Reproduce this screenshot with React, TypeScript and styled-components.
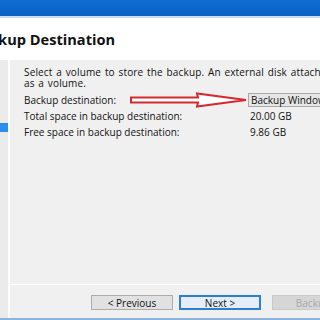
import React from 'react'
import styled, { createGlobalStyle } from 'styled-components'

const GlobalStyle = createGlobalStyle`
  html, body {
    margin: 0;
    padding: 0;
    width: 320px;
    height: 320px;
    overflow: hidden;
    background: #ffffff;
  }
`

const Window = styled.div`
  width: 320px;
  height: 320px;
  display: flex;
  flex-direction: column;
  overflow: hidden;
  font-family: 'Open Sans', 'Noto Sans', sans-serif;
  color: #111111;
  border-bottom: 2px solid #8db4dc;
  box-sizing: border-box;
`

const TitleBar = styled.div`
  height: 16px;
  flex: none;
  background: linear-gradient(#0f6cd0, #0a62c4);
  border-bottom: 2px solid #c9dcf1;
`

const Header = styled.div`
  height: 42px;
  flex: none;
  background: #ffffff;
  display: flex;
  align-items: center;
  overflow: hidden;
`

const Title = styled.h1`
  margin: 0 0 0 -28px;
  font-size: 14.6px;
  font-weight: 700;
  white-space: nowrap;
  color: #111111;
`

const Body = styled.div`
  flex: 1;
  display: flex;
  min-height: 0;
`

const Nav = styled.div`
  width: 8px;
  flex: none;
  background: #ebebeb;
  border-right: 2px solid #ffffff;
  padding-top: 63px;
`

const NavItem = styled.div<{ $active?: boolean }>`
  height: 9px;
  background: ${p => (p.$active ? '#2b8ff0' : 'transparent')};
`

const Main = styled.div`
  flex: 1;
  display: flex;
  flex-direction: column;
  background: #f0f0f0;
  min-width: 0;
`

const Content = styled.div`
  flex: 1;
  padding: 7px 0 0 14px;
  font-size: 10px;
  overflow: hidden;
`

const Intro = styled.p`
  margin: 0 0 3px;
  line-height: 11px;
  white-space: nowrap;
  letter-spacing: 0.15px;
  word-spacing: 1px;
`

const Row = styled.div`
  position: relative;
  display: grid;
  grid-template-columns: 224px auto;
  align-items: center;
  height: 16px;
  white-space: nowrap;
`

const Value = styled.span`
  padding-left: 2px;
`

const Dropdown = styled.div`
  height: 14px;
  box-sizing: border-box;
  display: flex;
  align-items: center;
  padding-left: 2px;
  background: #e6e6e6;
  border: 1px solid #a9a9a9;
  width: 120px;
`

const Annotation = styled.svg`
  position: absolute;
  left: 106px;
  top: 0;
  width: 118px;
  height: 16px;
`

const Footer = styled.div`
  height: 34px;
  flex: none;
  box-sizing: border-box;
  border-top: 1px solid #ffffff;
  display: flex;
  align-items: flex-start;
  padding: 10px 0 0 81px;
  gap: 6px;
`

const Button = styled.button<{ $primary?: boolean; $gap?: number }>`
  width: 82px;
  height: 15px;
  flex: none;
  box-sizing: border-box;
  padding: 0;
  margin-left: ${p => p.$gap ?? 0}px;
  font-family: inherit;
  font-size: 10px;
  line-height: 1;
  color: #111111;
  background: ${p => (p.$primary ? '#e5eef8' : '#e1e1e1')};
  border: ${p => (p.$primary ? '2px solid #2a7fd4' : '1px solid #adadad')};

  &:disabled {
    background: #d6d6d6;
    border-color: #c8c8c8;
    color: #a8a8a8;
  }
`

export default function App() {
  return (
    <>
      <GlobalStyle />
      <Window>
        <TitleBar />
        <Header>
          <Title>Backup Destination</Title>
        </Header>
        <Body>
          <Nav>
            <NavItem $active />
          </Nav>
          <Main>
            <Content>
              <Intro>
                Select a volume to store the backup. An external disk attached to this server will be listed
                <br />
                as a volume.
              </Intro>
              <Row>
                <span>Backup destination:</span>
                <Dropdown>Backup Windows (E:)</Dropdown>
                <Annotation viewBox="0 0 118 16">
                  <path
                    d="M1 5.5 H68 L67 1.5 L116 8 L67 14.5 L68 10.5 H1 Z"
                    fill="#ffffff"
                    stroke="#d42a2f"
                    strokeWidth="2"
                    strokeLinejoin="miter"
                  />
                </Annotation>
              </Row>
              <Row>
                <span>Total space in backup destination:</span>
                <Value>20.00 GB</Value>
              </Row>
              <Row>
                <span>Free space in backup destination:</span>
                <Value>9.86 GB</Value>
              </Row>
            </Content>
            <Footer>
              <Button>&lt; Previous</Button>
              <Button $primary>Next &gt;</Button>
              <Button disabled $gap={5}>Backup</Button>
            </Footer>
          </Main>
        </Body>
      </Window>
    </>
  )
}
